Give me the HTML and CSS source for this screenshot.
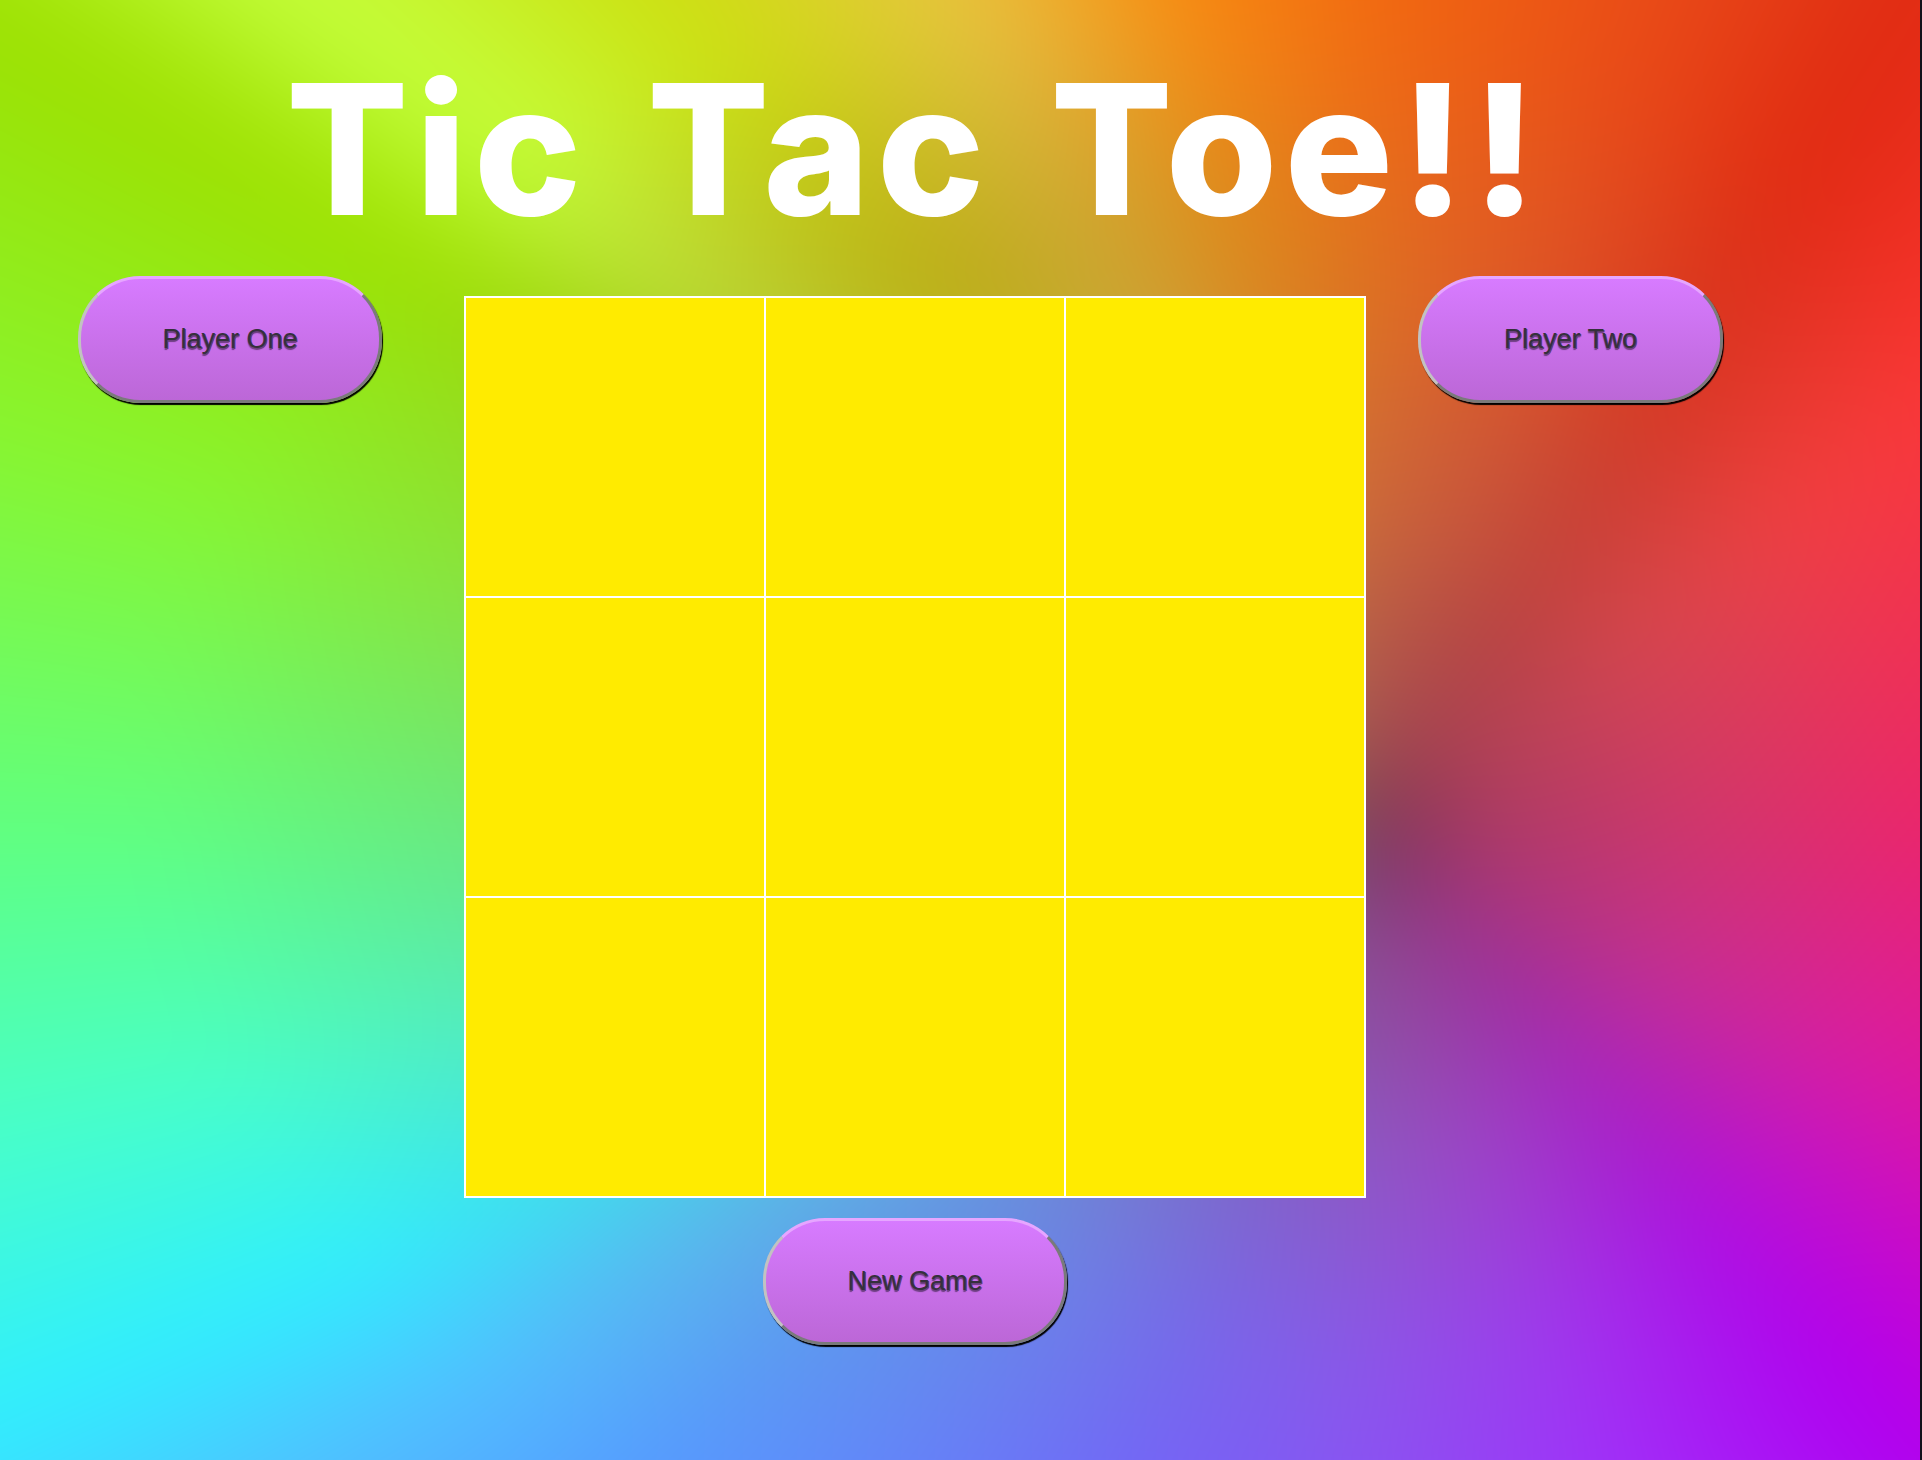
FILE: index.html
```html
<!DOCTYPE html>
<html lang="en">
<head>
<meta charset="utf-8">
<title>Tic Tac Toe</title>
<link rel="stylesheet" href="styles.css">
</head>
<body>
<div class="page">
  <h1 class="title">Tic Tac Toe!!</h1>
  <div class="arena">
    <button class="btn btn-left">Player One</button>
    <div class="center-col">
      <div class="board">
        <div class="cell"></div><div class="cell"></div><div class="cell"></div>
        <div class="cell"></div><div class="cell"></div><div class="cell"></div>
        <div class="cell"></div><div class="cell"></div><div class="cell"></div>
      </div>
      <button class="btn">New Game</button>
    </div>
    <button class="btn btn-right">Player Two</button>
  </div>
</div>
</body>
</html>
```
FILE: styles.css
```css
html { background: #12121a; }
body { margin: 0; }

.page {
  position: relative;
  isolation: isolate;
  width: 1920px;
  height: 1460px;
  overflow: hidden;
}

/* blurred colour-wheel backdrop (layer under the content) */
.page::before {
  content: "";
  position: absolute;
  inset: -150px;
  z-index: -1;
  filter: blur(45px);
  background:
    radial-gradient(circle at 1523px 983px, rgba(115,50,85,0.95) 0px, rgba(140,60,95,0.6) 110px, rgba(150,70,100,0.2) 320px, rgba(150,80,100,0) 520px),
    radial-gradient(ellipse 480px 260px at 1120px 430px, rgba(175,135,0,0.45) 0%, rgba(175,135,0,0.2) 55%, rgba(175,135,0,0) 100%),
    radial-gradient(ellipse 1000px 800px at 1300px 930px, rgba(150,125,125,0.38) 0%, rgba(150,125,125,0.24) 55%, rgba(150,125,125,0) 100%),
    conic-gradient(from 0deg at 1523px 983px,
      #f26a10 0deg, #e84818 20deg, #e02a12 33deg, #ff3535 52deg, #f51a6a 90deg,
      #e010a8 116deg, #b000f0 139deg, #a030fa 160deg, #8a50f8 180deg, #7064ff 200deg,
      #559cff 229deg, #50c0ff 239deg, #30eeff 247deg, #48ffc8 258deg, #60ff80 270deg,
      #88f530 286deg, #9ee000 301deg, #c4ff3c 308deg, #cce010 320deg, #e8c440 334deg,
      #f88c10 347deg, #f26a10 360deg);
}

.title {
  margin: 0;
  padding-top: 59px;
  width: 1830px;
  text-align: center;
  font-family: "Inter", "Liberation Sans", sans-serif;
  font-weight: 800;
  font-size: 181px;
  line-height: 181px;
  letter-spacing: 7px;
  word-spacing: 12px;
  color: #ffffff;
}

.arena {
  display: flex;
  align-items: flex-start;
  padding-top: 36px;
  padding-left: 78px;
}

.btn {
  box-sizing: border-box;
  width: 304px;
  height: 127px;
  border-radius: 62px;
  border-style: solid;
  border-width: 3px;
  border-color: #e6a6ff #7a7a7a #7a7a7a #c2c2c2;
  background: linear-gradient(#d77bff, #bc67d7);
  box-shadow: 1px 2px 1px #000;
  font-family: "Liberation Sans", Arial, sans-serif;
  font-size: 27px;
  color: #35303c;
  text-shadow: 0 2px 1px #6e3f82, 1px 1px 0 #5a3a6a;
  padding: 0;
  cursor: pointer;
}

.btn-left { margin-right: 82px; }
.btn-right { margin-left: 52px; width: 305px; }

.center-col {
  display: flex;
  flex-direction: column;
  align-items: center;
  gap: 20px;
  margin-top: 20px;
}

.board {
  display: grid;
  grid-template-columns: repeat(3, 300px);
  grid-template-rows: repeat(3, 300px);
  border: 1px solid #ffffff;
}

.cell {
  box-sizing: border-box;
  border: 1px solid #ffffff;
  background: #ffeb00;
}
```
